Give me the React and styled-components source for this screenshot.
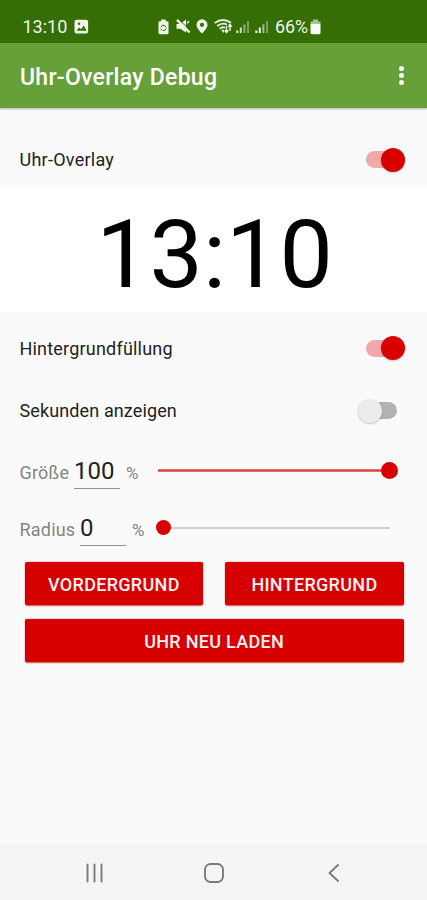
import React from 'react';
import styled, { createGlobalStyle } from 'styled-components';

const Global = createGlobalStyle`
  * { box-sizing: border-box; }
  body { margin: 0; background: #fafafa; font-family: Roboto, sans-serif; }
`;

const Screen = styled.div`
  width: 427px;
  height: 900px;
  display: flex;
  flex-direction: column;
  overflow: hidden;
  background: #fafafa;
`;

const StatusBar = styled.header`
  height: 43px;
  flex: none;
  display: flex;
  align-items: center;
  padding: 10px 0 0 22.5px;
  background: #356e04;
  color: #eef5e8;
`;

const StatusText = styled.span`
  font-size: ${(p) => p.$size}px;
  line-height: 22px;
  white-space: nowrap;
  flex: none;
  width: ${(p) => p.$width}px;
  margin-left: ${(p) => p.$gap || 0}px;
`;

const StatusIcon = styled.svg`
  display: block;
  flex: none;
  margin-left: ${(p) => p.$gap}px;
`;

const AppBar = styled.div`
  height: 65px;
  flex: none;
  display: flex;
  align-items: center;
  justify-content: space-between;
  padding: 0 23px 0 20px;
  background: #679f38;
  box-shadow: 0 1px 2px rgba(0, 0, 0, 0.3);
  z-index: 1;
`;

const Title = styled.h1`
  margin: 0;
  padding-top: 4px;
  font-size: 23px;
  font-weight: 500;
  line-height: 30px;
  color: #fff;
  letter-spacing: 0.28px;
`;

const MenuButton = styled.button`
  display: flex;
  flex-direction: column;
  gap: 2px;
  padding: 0;
  border: 0;
  background: none;
`;

const Dot = styled.i`
  width: 5px;
  height: 5px;
  border-radius: 50%;
  background: #fff;
`;

const SettingRow = styled.div`
  height: ${(p) => p.$height}px;
  flex: none;
  display: flex;
  align-items: center;
  justify-content: space-between;
  padding: ${(p) => p.$top || 0}px 22.4px 0 19.5px;
`;

const Label = styled.span`
  font-size: 18px;
  line-height: 24px;
  color: #222;
  white-space: nowrap;
  padding-top: 1px;
  letter-spacing: ${(p) => p.$spacing}px;
`;

const Toggle = styled.span`
  width: 47px;
  height: 24px;
  display: flex;
  align-items: center;
  justify-content: ${(p) => (p.$on ? 'flex-end' : 'flex-start')};
`;

const Track = styled.span`
  width: 39px;
  height: 17px;
  display: flex;
  align-items: center;
  flex: none;
  justify-content: ${(p) => (p.$on ? 'flex-end' : 'flex-start')};
  border-radius: 9px;
  background: ${(p) => (p.$on ? '#f0a9aa' : '#b2b2b2')};
`;

const Thumb = styled.span`
  width: 24px;
  height: 24px;
  flex: none;
  border-radius: 50%;
  background: ${(p) => (p.$on ? '#d90000' : '#ececec')};
  box-shadow: 0 1px 2px rgba(0, 0, 0, 0.22);
`;

const ClockPanel = styled.div`
  height: 126px;
  flex: none;
  display: flex;
  align-items: center;
  justify-content: center;
  padding: 11px 0 0 2px;
  background: #fff;
  color: #000;
  font-size: 95px;
  line-height: 112px;
`;

const SliderRow = styled.div`
  height: 57px;
  flex: none;
  display: flex;
  align-items: center;
  padding: 0 37px 0 19.5px;
`;

const Fields = styled.div`
  width: 138px;
  display: flex;
  align-items: baseline;
  flex: none;
  padding-top: 4px;
`;

const Caption = styled.span`
  font-size: 18px;
  line-height: 24px;
  color: #858585;
  letter-spacing: 0.2px;
  width: ${(p) => p.$width}px;
`;

const Unit = styled.span`
  font-size: 17px;
  line-height: 24px;
  color: #858585;
  margin-left: 6px;
`;

const Value = styled.span`
  width: 46px;
  height: 33px;
  font-size: 24px;
  line-height: 30px;
  color: #222;
  border-bottom: 1px solid #929292;
`;

const Rail = styled.div`
  flex: 1;
  height: ${(p) => (p.$full ? 17 : 16)}px;
  display: flex;
  align-items: center;
  justify-content: ${(p) => (p.$full ? 'flex-end' : 'flex-start')};
  background: linear-gradient(${(p) => (p.$full ? '#e08a8b, #cf4648, #e08a8b' : '#d0d0d0, #d0d0d0')})
    center / 100% ${(p) => (p.$full ? 3 : 2)}px no-repeat;
`;

const Knob = styled.span`
  width: ${(p) => p.$size}px;
  height: ${(p) => p.$size}px;
  flex: none;
  border-radius: 50%;
  background: #d90000;
  margin: 0 ${(p) => (p.$full ? -8 : 0)}px 0 ${(p) => (p.$full ? 0 : -1.5)}px;
`;

const Actions = styled.div`
  display: grid;
  grid-template-columns: 1fr 1fr;
  gap: 14px 22px;
  padding: 6px 23.3px 0 24.6px;
`;

const ActionButton = styled.button`
  height: 43px;
  padding: 2px 0 0;
  border: 0;
  border-radius: 2px;
  background: #d70000;
  box-shadow: 0 0.5px 1.5px rgba(190, 0, 0, 0.7);
  color: #fff3f1;
  font: 500 18px/24px Roboto, sans-serif;
  letter-spacing: 0.3px;
  grid-column: ${(p) => (p.$wide ? '1 / -1' : 'auto')};
`;

const NavBar = styled.nav`
  height: 56px;
  flex: none;
  margin-top: auto;
  display: flex;
  align-items: center;
  justify-content: space-between;
  padding: 2px 83px 0 84px;
  background: #f5f5f5;
`;

const NavIcon = styled.svg`
  display: block;
  fill: none;
  stroke: #7b7b7b;
  stroke-width: 1.9;
  stroke-linecap: round;
  stroke-linejoin: round;
`;

const Switch = ({ on }) => (
  <Toggle $on={on}>
    <Track $on={on}>
      <Thumb $on={on} />
    </Track>
  </Toggle>
);

const SignalIcon = ({ gap, filled }) => (
  <StatusIcon $gap={gap} width="14" height="14" viewBox="0 0 14 14" fill="#eef5e8">
    <rect x="0.3" y="10.5" width="2" height="2.5" />
    <rect x="3.8" y="7.5" width="2" height="5.5" opacity={filled ? 1 : 0.8} />
    <rect x="7.4" y="4.3" width="2" height="8.7" opacity={filled ? 0.6 : 0.45} />
    <rect x="11" y="1" width="2" height="12" opacity="0.38" />
  </StatusIcon>
);

export default function App() {
  return (
    <Screen>
      <Global />
      <StatusBar>
        <StatusText $size={18} $width={51.5}>13:10</StatusText>
        <StatusIcon $gap={0} width="15" height="15" viewBox="0 0 15 15">
          <rect x="0.5" y="0.8" width="13.6" height="13.6" rx="2" fill="#eef5e8" />
          <path d="M2.5 11.8 5.2 8.4 7 10.3 9.8 6.6 12.6 11.8Z" fill="#356e04" />
          <circle cx="5" cy="4.8" r="1.2" fill="#356e04" />
        </StatusIcon>
        <StatusIcon $gap={69} width="11" height="16" viewBox="0 0 11 16">
          <path d="M3.2 .5h4.6v1.7h1.4Q10.5 2.2 10.5 3.6v10.2q0 1.5-1.4 1.5H1.9Q.5 15.3.5 13.8V3.6Q.5 2.2 1.8 2.2H3.2Z" fill="#eef5e8" />
          <path d="M3.2 8.3 4.3 6.3H6.6L7.8 8.4M8 9.5 6.7 11.5H5M3.9 11.5 2.8 9.7" fill="none" stroke="#356e04" />
        </StatusIcon>
        <StatusIcon $gap={6.5} width="15" height="15" viewBox="0 0 15 15">
          <path d="M.5 5h3.700L10 .5v13L4.300 9.800H.5Z" fill="#eef5e8" />
          <path d="M11 4.300 13 2.300" stroke="#eef5e8" strokeWidth="1.5" />
          <path d="M2.800.2 14.500 12" stroke="#356e04" strokeWidth="1" />
          <path d="M1 .9 13.600 13.500" stroke="#eef5e8" strokeWidth="2.4" />
        </StatusIcon>
        <StatusIcon $gap={5.5} width="12" height="15" viewBox="0 0 12 15">
          <path fillRule="evenodd" d="M6 .3a5.5 5.5 0 0 0-5.5 5.5C.5 9.8 6 14.5 6 14.5s5.500-4.700 5.500-8.700A5.500 5.500 0 0 0 6 .3Zm0 3.400a2.100 2.100 0 1 1 0 4.200 2.100 2.100 0 0 1 0-4.200Z" fill="#eef5e8" />
        </StatusIcon>
        <StatusIcon $gap={6} width="19" height="15" viewBox="0 0 19 15">
          <g fill="none" stroke="#e3eddb" strokeWidth="1.9">
            <path d="M.7 4Q8.700-1.800 17 3.800" />
            <path d="M3.200 7Q8.500 3 13 5.800" />
            <path d="M5.600 9.800Q8.500 7.500 11 8.700" />
          </g>
          <path d="M7.400 11.300 9.300 10.500 10.500 12 9.300 14Z" fill="#eef5e8" />
          <path d="M12.500 13.500V7M10.800 11.300l1.700 2.200 1.700-2.200M16 5.500V12M14.300 7.700 16 5.500l1.700 2.200" stroke="#eef5e8" strokeWidth="1.4" fill="none" />
        </StatusIcon>
        <SignalIcon gap={2.5} />
        <SignalIcon gap={5} filled />
        <StatusText $size={17.8} $width={34} $gap={6.5}>66%</StatusText>
        <StatusIcon $gap={1} width="11" height="16" viewBox="0 0 11 16">
          <path d="M3 .5h5v2h2.500v3H.5v-3H3Z" fill="#a9c197" />
          <path d="M.5 5h10v8.500q0 1.700-1.500 1.700H2Q.5 15.200.5 13.500Z" fill="#f7fbf3" />
        </StatusIcon>
      </StatusBar>
      <AppBar>
        <Title>Uhr-Overlay Debug</Title>
        <MenuButton aria-label="Menü"><Dot /><Dot /><Dot /></MenuButton>
      </AppBar>
      <SettingRow $height={78} $top={25}>
        <Label $spacing={0.25}>Uhr-Overlay</Label>
        <Switch on />
      </SettingRow>
      <ClockPanel>13:10</ClockPanel>
      <SettingRow $height={67} $top={5}>
        <Label $spacing={0.2}>Hintergrundfüllung</Label>
        <Switch on />
      </SettingRow>
      <SettingRow $height={63}>
        <Label $spacing={0.12}>Sekunden anzeigen</Label>
        <Switch on={false} />
      </SettingRow>
      <SliderRow>
        <Fields>
          <Caption $width={54.5}>Größe</Caption>
          <Value>100</Value>
          <Unit>%</Unit>
        </Fields>
        <Rail $full><Knob $size={17} $full /></Rail>
      </SliderRow>
      <SliderRow>
        <Fields>
          <Caption $width={60.5}>Radius</Caption>
          <Value>0</Value>
          <Unit>%</Unit>
        </Fields>
        <Rail><Knob $size={15} /></Rail>
      </SliderRow>
      <Actions>
        <ActionButton>VORDERGRUND</ActionButton>
        <ActionButton>HINTERGRUND</ActionButton>
        <ActionButton $wide>UHR NEU LADEN</ActionButton>
      </Actions>
      <NavBar>
        <NavIcon width="21" height="20" viewBox="0 0 21 20">
          <path d="M3.5 1.5v17M10.5 1.5v17M17.5 1.5v17" />
        </NavIcon>
        <NavIcon width="20" height="20" viewBox="0 0 20 20">
          <rect x="1" y="1" width="18" height="18" rx="5.5" />
        </NavIcon>
        <NavIcon width="21" height="20" viewBox="0 0 21 20">
          <path d="M15 2 6.5 10 15 18" />
        </NavIcon>
      </NavBar>
    </Screen>
  );
}
